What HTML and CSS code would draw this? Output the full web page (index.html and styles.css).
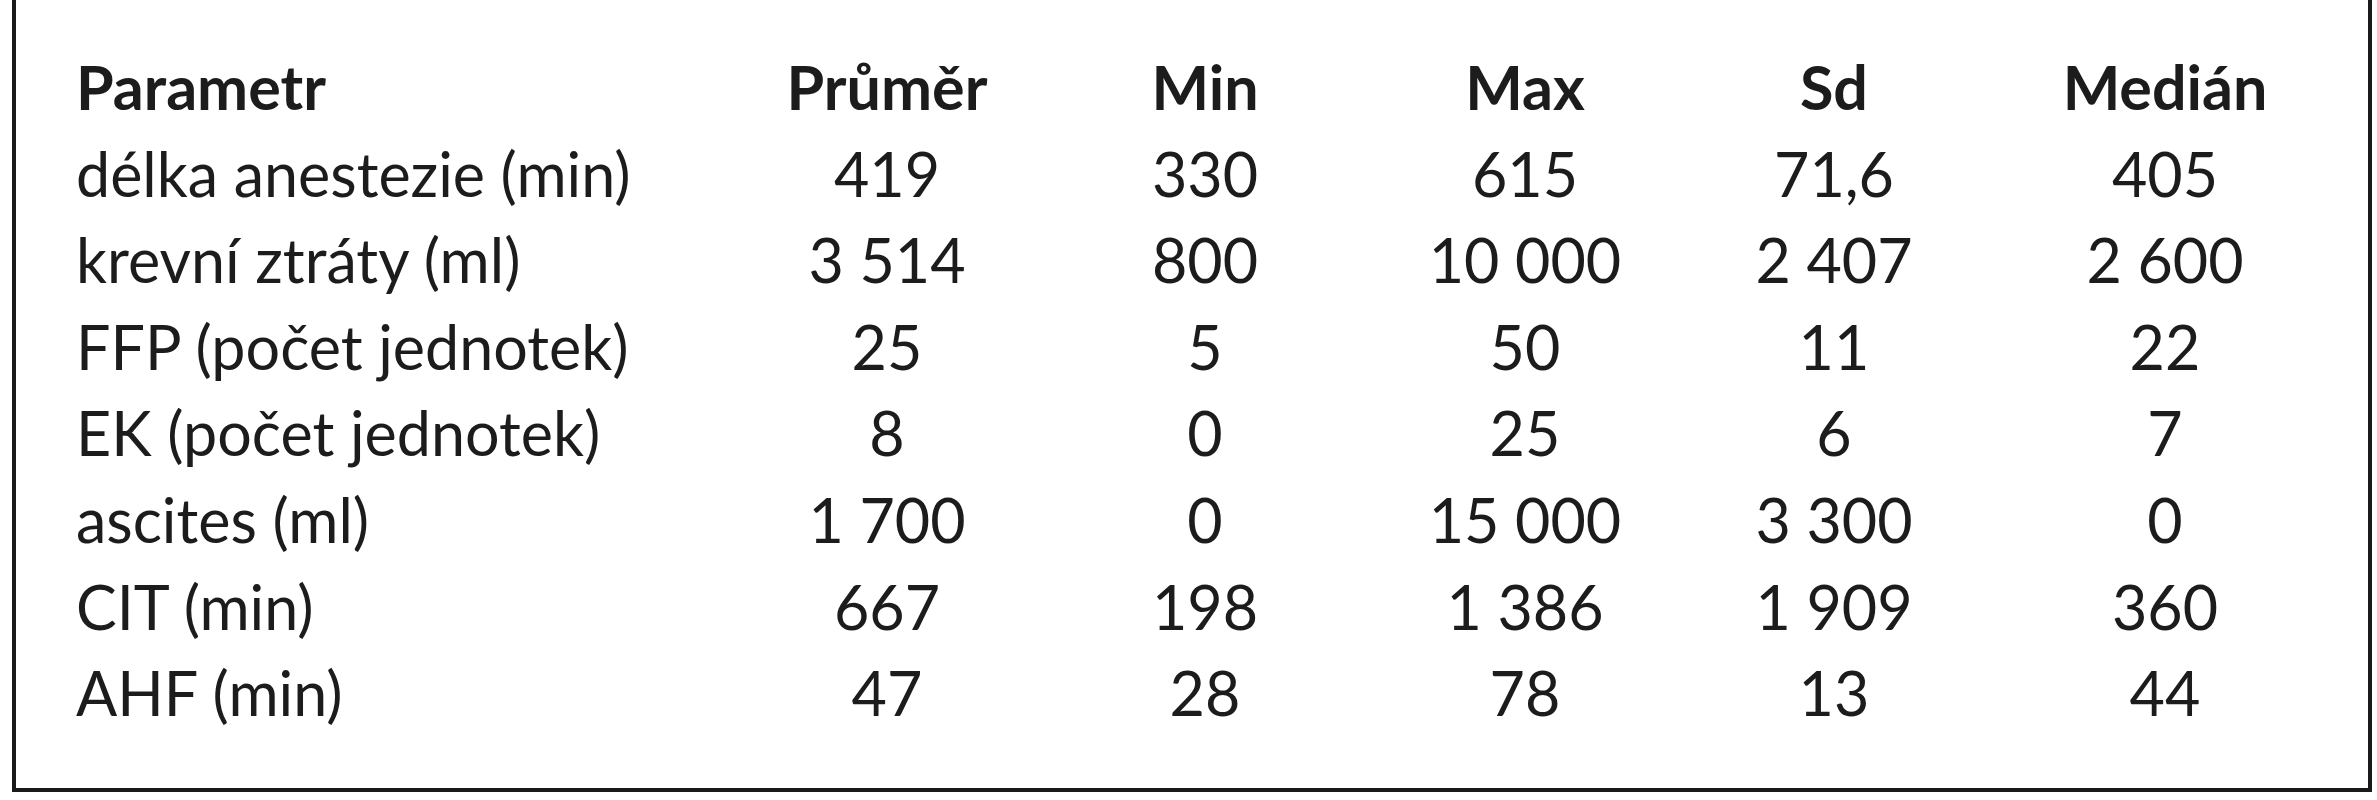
FILE: index.html
```html
<!DOCTYPE html>
<html lang="cs">
<head>
<meta charset="utf-8">
<title>Parametry</title>
<link rel="stylesheet" href="styles.css">
</head>
<body>
<div class="box">
  <div class="row head">
    <div class="name">Parametr</div>
    <div class="val">Průměr</div>
    <div class="val">Min</div>
    <div class="val">Max</div>
    <div class="val">Sd</div>
    <div class="val">Medián</div>
  </div>
  <div class="row">
    <div class="name">délka anestezie (min)</div>
    <div class="val">419</div>
    <div class="val">330</div>
    <div class="val">615</div>
    <div class="val">71,6</div>
    <div class="val">405</div>
  </div>
  <div class="row">
    <div class="name">krevní ztráty (ml)</div>
    <div class="val">3 514</div>
    <div class="val">800</div>
    <div class="val">10 000</div>
    <div class="val">2 407</div>
    <div class="val">2 600</div>
  </div>
  <div class="row">
    <div class="name">FFP (počet jednotek)</div>
    <div class="val">25</div>
    <div class="val">5</div>
    <div class="val">50</div>
    <div class="val">11</div>
    <div class="val">22</div>
  </div>
  <div class="row">
    <div class="name">EK (počet jednotek)</div>
    <div class="val">8</div>
    <div class="val">0</div>
    <div class="val">25</div>
    <div class="val">6</div>
    <div class="val">7</div>
  </div>
  <div class="row">
    <div class="name">ascites (ml)</div>
    <div class="val">1 700</div>
    <div class="val">0</div>
    <div class="val">15 000</div>
    <div class="val">3 300</div>
    <div class="val">0</div>
  </div>
  <div class="row">
    <div class="name">CIT (min)</div>
    <div class="val">667</div>
    <div class="val">198</div>
    <div class="val">1 386</div>
    <div class="val">1 909</div>
    <div class="val">360</div>
  </div>
  <div class="row">
    <div class="name">AHF (min)</div>
    <div class="val">47</div>
    <div class="val">28</div>
    <div class="val">78</div>
    <div class="val">13</div>
    <div class="val">44</div>
  </div>
</div>
</body>
</html>
```

FILE: styles.css
```css
html, body {
  margin: 0;
  padding: 0;
  background: #ffffff;
}

body {
  font-family: "Lato", "Liberation Sans", sans-serif;
  color: #1c1c1c;
}

.box {
  box-sizing: border-box;
  margin-left: 12px;
  width: 2360px;
  height: 792px;
  border: 4px solid #1a1a1a;
  border-top: none;
  padding: 44px 0 0 60px;
}

.row {
  display: grid;
  grid-template-columns: 651px 320px 316px 324px 294px 368px;
  height: 86.6px;
  font-size: 61px;
  line-height: 86.6px;
  white-space: nowrap;
}

.row.head {
  font-weight: 700;
}

.name {
  text-align: left;
}

.val {
  text-align: center;
}
```
